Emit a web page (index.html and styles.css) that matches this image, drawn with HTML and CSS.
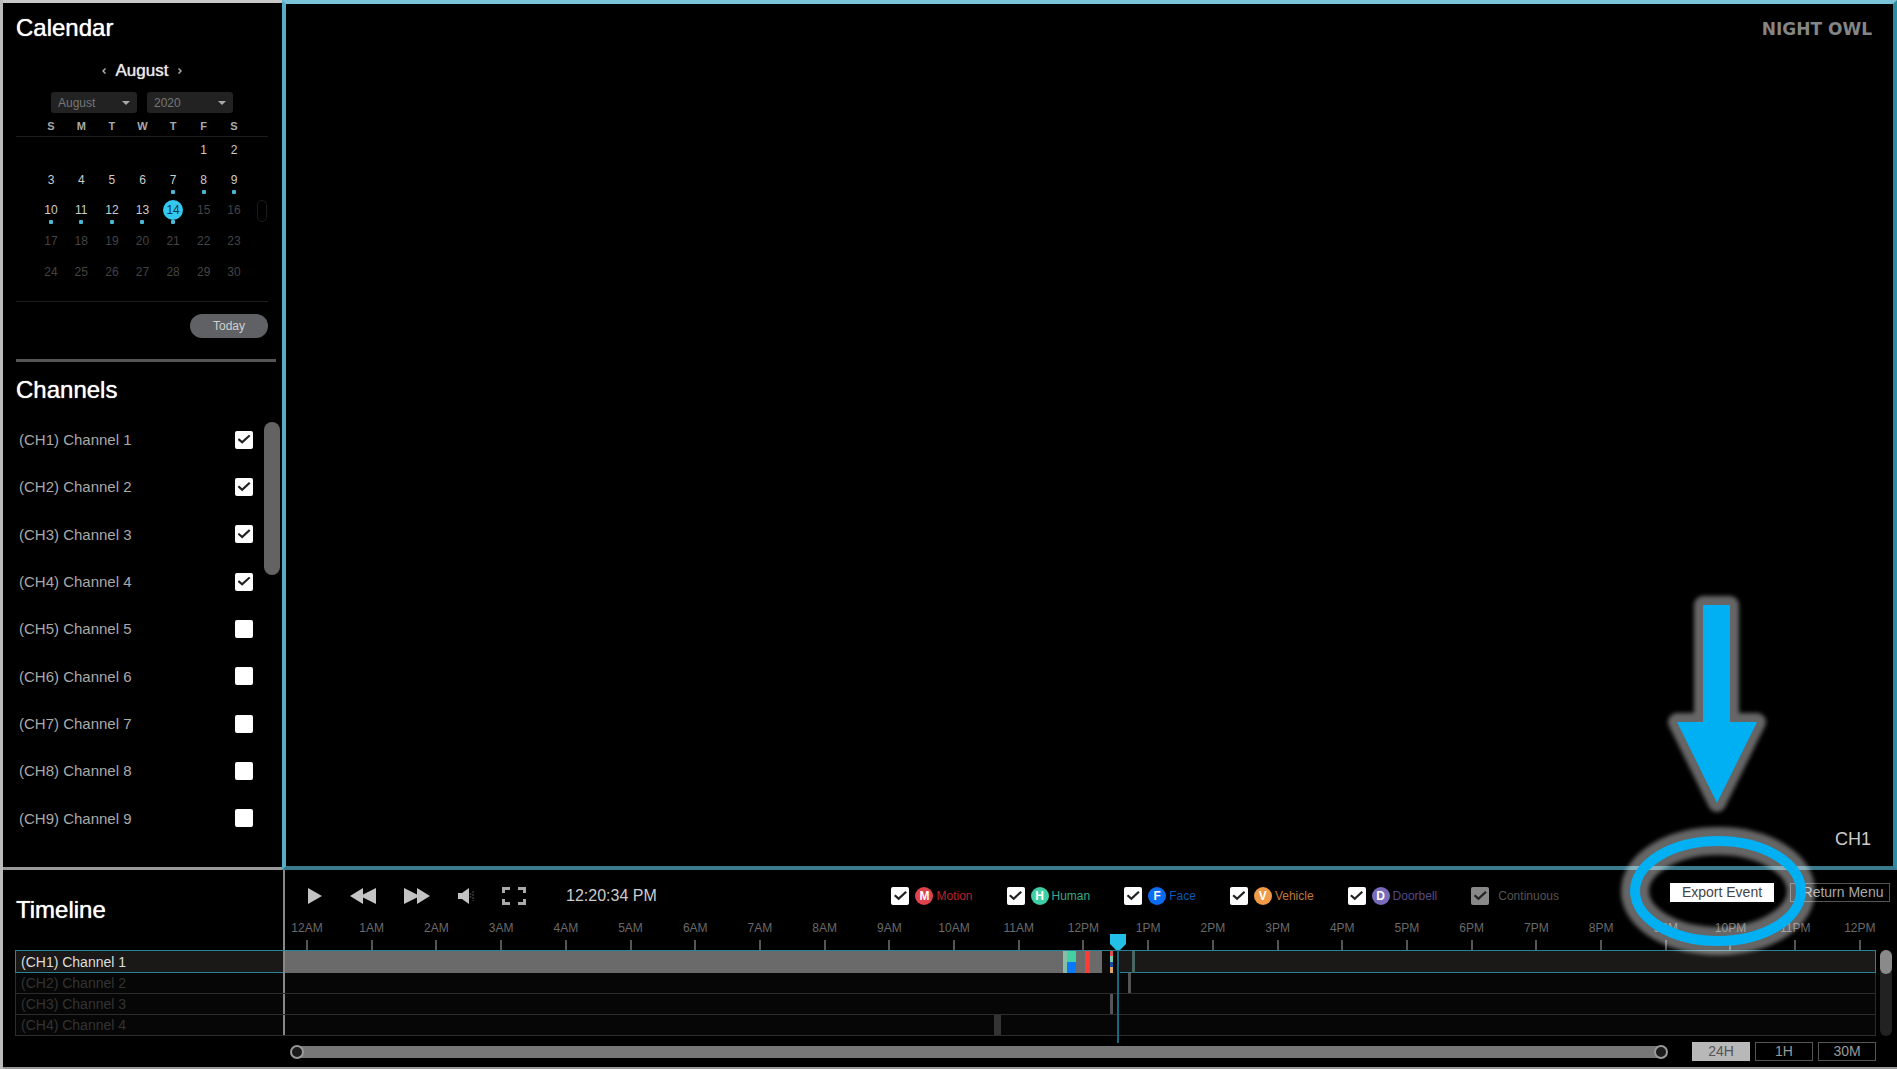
FILE: index.html
```html
<!DOCTYPE html>
<html lang="en">
<head>
<meta charset="utf-8">
<title>Night Owl Playback</title>
<link rel="stylesheet" href="styles.css">
</head>
<body>
<div class="app">
  <div class="upper">
    <aside class="sidebar">
      <h2 class="title">Calendar</h2>
      <section class="calendar">
        <div class="month-nav">
          <button class="nav-arrow" aria-label="Previous month"><svg width="4" height="6" viewBox="0 0 4 6"><path d="M3.5 .5L1 3l2.5 2.5" /></svg></button>
          <span>August</span>
          <button class="nav-arrow" aria-label="Next month"><svg width="4" height="6" viewBox="0 0 4 6"><path d="M.5 .5L3 3L.5 5.500" /></svg></button>
        </div>
        <div class="pickers">
          <select class="picker" aria-label="Month"><option>August</option></select>
          <select class="picker" aria-label="Year"><option>2020</option></select>
        </div>
        <div class="days-wrap">
          <table class="days">
            <thead><tr><th>S</th><th>M</th><th>T</th><th>W</th><th>T</th><th>F</th><th>S</th></tr></thead>
            <tbody>
              <tr><td></td><td></td><td></td><td></td><td></td><td><span>1</span></td><td><span>2</span></td></tr>
              <tr><td><span>3</span></td><td><span>4</span></td><td><span>5</span></td><td><span>6</span></td><td><span class="rec">7</span></td><td><span class="rec">8</span></td><td><span class="rec">9</span></td></tr>
              <tr><td><span class="rec">10</span></td><td><span class="rec">11</span></td><td><span class="rec">12</span></td><td><span class="rec">13</span></td><td><span class="rec today">14</span></td><td><span class="off">15</span></td><td><span class="off">16</span></td></tr>
              <tr class="later"><td><span class="off">17</span></td><td><span class="off">18</span></td><td><span class="off">19</span></td><td><span class="off">20</span></td><td><span class="off">21</span></td><td><span class="off">22</span></td><td><span class="off">23</span></td></tr>
              <tr class="later"><td><span class="off">24</span></td><td><span class="off">25</span></td><td><span class="off">26</span></td><td><span class="off">27</span></td><td><span class="off">28</span></td><td><span class="off">29</span></td><td><span class="off">30</span></td></tr>
            </tbody>
          </table>
          <i class="grip"></i>
        </div>
        <button class="today-btn">Today</button>
      </section>
      <hr class="rule">
      <h2 class="title">Channels</h2>
      <div class="channels">
        <div class="channel-list">
          <label class="channel">(CH1) Channel 1<input class="check" type="checkbox" checked></label>
          <label class="channel">(CH2) Channel 2<input class="check" type="checkbox" checked></label>
          <label class="channel">(CH3) Channel 3<input class="check" type="checkbox" checked></label>
          <label class="channel">(CH4) Channel 4<input class="check" type="checkbox" checked></label>
          <label class="channel">(CH5) Channel 5<input class="check" type="checkbox"></label>
          <label class="channel">(CH6) Channel 6<input class="check" type="checkbox"></label>
          <label class="channel">(CH7) Channel 7<input class="check" type="checkbox"></label>
          <label class="channel">(CH8) Channel 8<input class="check" type="checkbox"></label>
          <label class="channel">(CH9) Channel 9<input class="check" type="checkbox"></label>
        </div>
        <div class="channel-scroll"></div>
      </div>
    </aside>
    <main class="video">
      <span class="brand">NIGHT OWL</span>
      <span class="video-name">CH1</span>
    </main>
  </div>

  <section class="timeline">
    <div class="timeline-head">
      <h2 class="title timeline-title">Timeline</h2>
      <div class="panel">
        <div class="toolbar">
          <div class="transport">
            <button class="icon-btn" aria-label="Play"><svg width="14" height="18" viewBox="0 0 14 18"><path d="M0 1l14 8L0 17z"/></svg></button>
            <button class="icon-btn" aria-label="Rewind"><svg width="26" height="18" viewBox="0 0 26 18"><path d="M13 1v6.500L26 1v16l-13-6.500V17L0 9z"/></svg></button>
            <button class="icon-btn" aria-label="Fast forward"><svg width="26" height="18" viewBox="0 0 26 18"><path d="M13 1v6.500L0 1v16l13-6.500V17l13-8z"/></svg></button>
            <button class="icon-btn" aria-label="Volume"><svg width="16" height="18" viewBox="0 0 16 18"><path d="M0 6h4l7-5v16l-7-5H0z"/><path class="wave" d="M12.500 6v6M15 4v10"/></svg></button>
            <button class="icon-btn" aria-label="Full screen"><svg width="24" height="18" viewBox="0 0 24 18"><path class="corner" d="M1.500 6V1.500H8M16 1.500h6.500V6M22.500 12v4.500H16M8 16.500H1.500V12"/></svg></button>
          </div>
          <time class="clock">12:20:34 PM</time>
          <div class="filters">
            <label class="filter motion"><input class="check" type="checkbox" checked><b class="badge">M</b>Motion</label>
            <label class="filter human"><input class="check" type="checkbox" checked><b class="badge">H</b>Human</label>
            <label class="filter face"><input class="check" type="checkbox" checked><b class="badge">F</b>Face</label>
            <label class="filter vehicle"><input class="check" type="checkbox" checked><b class="badge">V</b>Vehicle</label>
            <label class="filter doorbell"><input class="check" type="checkbox" checked><b class="badge">D</b>Doorbell</label>
            <label class="filter continuous"><input class="check" type="checkbox" checked disabled>Continuous</label>
          </div>
          <div class="actions">
            <div class="export-wrap">
              <button class="export-btn">Export Event</button>
              <svg class="callout" width="240" height="400" viewBox="0 0 240 400" aria-hidden="true">
                <defs><filter id="soft" x="-20%" y="-20%" width="140%" height="140%"><feGaussianBlur stdDeviation="2"/></filter></defs>
                <g class="glow" filter="url(#soft)">
                  <path d="M103 24h27v117h27l-40 81-40-81h26z"/>
                  <ellipse cx="118" cy="310" rx="83" ry="50"/>
                </g>
                <path class="arrow" d="M103 24h27v117h27l-40 81-40-81h26z"/>
                <ellipse class="ring" cx="118" cy="310" rx="83" ry="50"/>
              </svg>
            </div>
            <button class="return-btn">Return Menu</button>
          </div>
        </div>
        <div class="hours">
          <span>12AM</span><span>1AM</span><span>2AM</span><span>3AM</span><span>4AM</span><span>5AM</span><span>6AM</span><span>7AM</span><span>8AM</span><span>9AM</span><span>10AM</span><span>11AM</span><span>12PM</span><span>1PM</span><span>2PM</span><span>3PM</span><span>4PM</span><span>5PM</span><span>6PM</span><span>7PM</span><span>8PM</span><span>9PM</span><span>10PM</span><span>11PM</span><span>12PM</span>
        </div>
      </div>
    </div>

    <div class="tracks">
      <div class="track-list">
        <div class="track active">
          <span class="track-name">(CH1) Channel 1</span>
          <div class="lane">
            <i class="ev fill" style="left:0;width:51.4%"></i>
            <i class="ev black" style="left:51.4%;width:1.1%"></i>
            <i class="ev mint" style="left:48.9%;width:.3%"></i>
            <i class="ev split" style="left:49.2%;width:.55%"></i>
            <i class="ev red" style="left:50.3%;width:.3%"></i>
            <i class="ev multi" style="left:51.9%;width:.2%"></i>
            <i class="ev teal" style="left:53.3%;width:.15%"></i>
            <div class="playhead" style="left:52.35%"><svg width="16" height="16" viewBox="0 0 16 16"><path d="M0 0h16v10l-6 6H6l-6-6z"/></svg></div>
          </div>
        </div>
        <div class="track">
          <span class="track-name">(CH2) Channel 2</span>
          <div class="lane"><i class="ev gray" style="left:53%;width:.2%"></i></div>
        </div>
        <div class="track">
          <span class="track-name">(CH3) Channel 3</span>
          <div class="lane"><i class="ev gray" style="left:51.9%;width:.2%"></i></div>
        </div>
        <div class="track">
          <span class="track-name">(CH4) Channel 4</span>
          <div class="lane"><i class="ev dim" style="left:44.6%;width:.42%"></i></div>
        </div>
      </div>
      <div class="track-scroll"><div class="track-thumb"></div></div>
    </div>

    <div class="footer">
      <div class="range">
        <input type="range" min="0" max="24" value="0" aria-label="Range start">
        <input type="range" min="0" max="24" value="24" aria-label="Range end">
      </div>
      <div class="zooms">
        <button class="zoom on">24H</button>
        <button class="zoom">1H</button>
        <button class="zoom">30M</button>
      </div>
    </div>
  </section>
</div>
</body>
</html>
```
FILE: styles.css
```css
* { box-sizing: border-box; }

body {
  margin: 0;
  background: #000;
  color: #ddd;
  font-family: "Liberation Sans", Arial, sans-serif;
}

button, select, input { font: inherit; margin: 0; }
button { padding: 0; border: 0; background: none; color: inherit; }

.app {
  display: grid;
  grid-template-rows: 1fr auto;
  min-height: 100vh;
  border-left: 3px solid #bbb;
}

.upper { display: grid; grid-template-columns: 279px 1fr; }

.title {
  margin: 0;
  font-size: 24px;
  line-height: 28px;
  font-weight: 400;
  color: #fff;
  text-shadow: 0 0 1px #fff;
}

/* Sidebar */
.sidebar {
  display: flex;
  flex-direction: column;
  padding: 11px 0 25px 13px;
  border-top: 3px solid #c8c8c8;
  border-bottom: 3px solid #999;
}

.calendar {
  display: flex;
  flex-direction: column;
  width: 252px;
  margin-top: 19px;
}

.month-nav {
  display: flex;
  justify-content: center;
  align-items: center;
  gap: 10px;
  font-size: 17px;
  line-height: 20px;
  color: #e8e8e8;
  text-shadow: 0 0 1px #ddd;
}

.nav-arrow { display: flex; }
.nav-arrow svg { fill: none; stroke: #aaa; stroke-width: 1.5; }

.pickers {
  display: flex;
  justify-content: center;
  gap: 10px;
  margin-top: 11px;
}

.picker {
  appearance: none;
  width: 86px;
  height: 21px;
  padding: 0 7px;
  border: 0;
  border-radius: 3px;
  background: #222 url("data:image/svg+xml,%3Csvg xmlns='http://www.w3.org/2000/svg' width='8' height='4'%3E%3Cpath d='M0 0h8L4 4z' fill='%23aaa'/%3E%3C/svg%3E") no-repeat right 7px center;
  color: #777;
  font-size: 12px;
}

.days-wrap {
  position: relative;
  padding-bottom: 12px;
  border-bottom: 1px solid #1c1c1c;
}

.days {
  width: 100%;
  table-layout: fixed;
  border-collapse: separate;
  border-spacing: 0;
  font-size: 12px;
  text-align: center;
}

.days th {
  height: 24px;
  padding: 3px 0 0;
  border-bottom: 1px solid #1c1c1c;
  font-size: 11px;
  color: #aaa;
}

.days td {
  height: 30px;
  padding: 0 0 4px;
  color: #ccc;
}

.days .later td { height: 31px; padding-bottom: 3px; }

.days th:first-child { width: 50px; }
.days th:last-child { width: 49px; }
.days th:first-child, .days td:first-child { padding-left: 20px; }
.days th:last-child, .days td:last-child { padding-right: 19px; }

.days span {
  position: relative;
  display: block;
  width: 20px;
  margin: 0 auto;
  border-radius: 10px;
  line-height: 20px;
}

.days .off { color: #444; }
.days .today { background: #35c8ee; color: #053a50; }

.days .rec::after {
  content: "";
  position: absolute;
  left: 8px;
  top: 20px;
  width: 4px;
  height: 4px;
  border-radius: 1px;
  background: #49b8d4;
}

.grip {
  position: absolute;
  right: 1px;
  top: 87px;
  width: 10px;
  height: 22px;
  border: 1px solid #1c1c1c;
  border-radius: 5px;
}

.today-btn {
  align-self: flex-end;
  width: 78px;
  height: 24px;
  margin-top: 12px;
  border-radius: 12px;
  background: #5f6164;
  color: #d0d0d0;
  font-size: 12px;
}

.rule {
  width: 260px;
  height: 3px;
  margin: 21px 0 14px;
  border: 0;
  background: #555;
}

.channels {
  flex: 1;
  display: flex;
  justify-content: space-between;
  margin: 12px 2px 0 3px;
}

.channel-list {
  display: grid;
  grid-auto-rows: 1fr;
  width: 234px;
}

.channel {
  display: flex;
  align-items: center;
  justify-content: space-between;
  min-height: 24px;
  font-size: 15px;
  color: #aaa;
}

.channel-scroll {
  width: 16px;
  height: 153px;
  margin-top: 6px;
  border-radius: 8px;
  background: #636363;
}

.check {
  appearance: none;
  display: grid;
  place-items: center;
  width: 18px;
  height: 18px;
  border-radius: 2px;
  background: #fff;
}

.check:checked::before {
  content: "";
  width: 13px;
  height: 10px;
  background: #222;
  clip-path: polygon(0 50%, 12% 36%, 36% 62%, 88% 0, 100% 14%, 36% 92%);
}

/* Video */
.video {
  display: flex;
  flex-direction: column;
  justify-content: space-between;
  align-items: flex-end;
  padding: 14px 21px 17px 0;
  border: 4px solid;
  border-color: #79c4d8 #2a8ba5 #3a7a8c #56aec6;
}

.brand {
  font: bold 17px/22px "DejaVu Sans", sans-serif;
  color: #858585;
}

.video-name { padding-right: 1px; font-size: 18px; line-height: 20px; color: #ccc; }

/* Timeline */
.timeline { border-bottom: 2px solid #999; }

.timeline-head { display: grid; grid-template-columns: 280px 1fr; }

.timeline-title { padding: 26px 0 0 13px; }

.panel {
  height: 80px;
  border-left: 2px solid #888;
}

.toolbar {
  display: flex;
  align-items: center;
  height: 52px;
  padding: 0 7px 0 23px;
}

.transport { display: flex; gap: 28px; }
.icon-btn { display: flex; }
.icon-btn svg { fill: #c4c4c4; }
.icon-btn .wave { fill: none; stroke: #3a3a3a; stroke-width: 1.5; stroke-dasharray: 2 1; }
.icon-btn .corner { fill: none; stroke: #aaa; stroke-width: 3; }

.clock { margin-left: 40px; font-size: 16px; color: #ccc; }

.filters {
  display: flex;
  gap: 34px;
  margin: 0 111px 0 auto;
}

.filter {
  display: flex;
  align-items: center;
  font-size: 12px;
}

.badge {
  width: 18px;
  margin: 0 3px 0 6px;
  border-radius: 9px;
  color: #fff;
  font-size: 12px;
  line-height: 18px;
  text-align: center;
}

.motion { color: #b8242e; }
.motion .badge { background: #e0424e; }
.human { color: #3aa888; }
.human .badge { background: #3fcfa4; }
.face { color: #0a58b8; }
.face .badge { background: #0a6cf0; }
.vehicle { color: #c07a3a; }
.vehicle .badge { background: #f09a48; }
.doorbell { color: #554a88; }
.doorbell .badge { background: #7a6cbc; }
.continuous { gap: 9px; color: #555; }
.continuous .check { background: #888; }

.actions {
  display: flex;
  gap: 16px;
  margin-bottom: 8px;
}

.export-wrap { position: relative; }

.export-btn, .return-btn {
  display: block;
  height: 19px;
  font-size: 14px;
  line-height: 17px;
}

.export-btn { width: 104px; background: #fff; color: #444; }
.return-btn { width: 100px; border: 1px solid #555; color: #aaa; padding-left: 6px; }

/* Arrow and ring pointing at the export button */
.callout {
  position: absolute;
  left: -70px;
  top: -302px;
  z-index: 2;
  pointer-events: none;
}

.glow { fill: none; stroke: #fff; stroke-width: 18; stroke-linejoin: round; opacity: .4; }
.glow ellipse { stroke-width: 28; }
.arrow { fill: #00b0f3; }
.ring { fill: none; stroke: #00b0f3; stroke-width: 10; }

.hours {
  display: flex;
  justify-content: space-between;
  padding: 0 21px 0 6px;
  font-size: 12px;
  line-height: 14px;
  color: #6a6a6a;
}

.hours span {
  display: flex;
  flex-direction: column;
  align-items: center;
  gap: 5px;
  width: 32px;
  margin-top: -1px;
}

.hours span::after {
  content: "";
  width: 2px;
  height: 10px;
  background: #555;
}

.tracks { display: flex; gap: 4px; padding: 0 5px 0 12px; }
.track-list { flex: 1; }

.track {
  display: grid;
  grid-template-columns: 267px 1fr;
  height: 21px;
  border: 1px solid #2c2c2c;
  border-top: 0;
  background: #060606;
  font-size: 14px;
  line-height: 20px;
  color: #333;
}

.track.active {
  height: 23px;
  border: 1px solid #2a8296;
  background: #1a1918;
  line-height: 22px;
  color: #ddd;
}

.track-name { padding-left: 5px; }

.lane { position: relative; border-left: 2px solid #888; }

.ev { position: absolute; top: 0; bottom: 0; }
.fill { background: #6b6a6a; }
.black { background: #0a0a0a; }
.mint { background: #86bfa8; }
.split { background: linear-gradient(#45cfa4 50%, #0a78ff 50%); }
.red { background: #ff3b38; }
.multi { background: linear-gradient(#d85050 25%, #7ac8b8 25% 50%, #1a4fa0 50% 75%, #e0a868 75%); }
.teal { background: #4a6660; }
.gray { background: #555; }
.dim { background: #333; }

.playhead {
  position: absolute;
  top: -17px;
  z-index: 1;
  width: 2px;
  height: 109px;
  background: #17697d;
}

.playhead svg { display: block; margin-left: -7px; fill: #24bfe6; }

.track-scroll {
  width: 12px;
  border-radius: 6px;
  background: #222;
}

.track-thumb { height: 24px; border-radius: 6px; background: #8a8a8a; }

.footer {
  display: flex;
  align-items: center;
  gap: 24px;
  height: 31px;
  padding: 0 21px 0 280px;
}

.range {
  flex: 1;
  display: grid;
  align-items: center;
  margin-left: 7px;
  background: linear-gradient(#777, #777) center / calc(100% - 14px) 12px no-repeat;
}

.range input {
  appearance: none;
  grid-area: 1 / 1;
  width: 100%;
  height: 14px;
  background: none;
  pointer-events: none;
}

.range input::-webkit-slider-thumb {
  appearance: none;
  width: 14px;
  height: 14px;
  border: 2px solid #999;
  border-radius: 50%;
  background: #1c1c1c;
  pointer-events: auto;
}

.zooms { display: flex; gap: 5px; }

.zoom {
  width: 58px;
  height: 19px;
  border: 1px solid #555;
  font-size: 14px;
  line-height: 17px;
  color: #999;
}

.zoom.on { border-color: #bbb; background: #b8b8b8; color: #555; }
```
